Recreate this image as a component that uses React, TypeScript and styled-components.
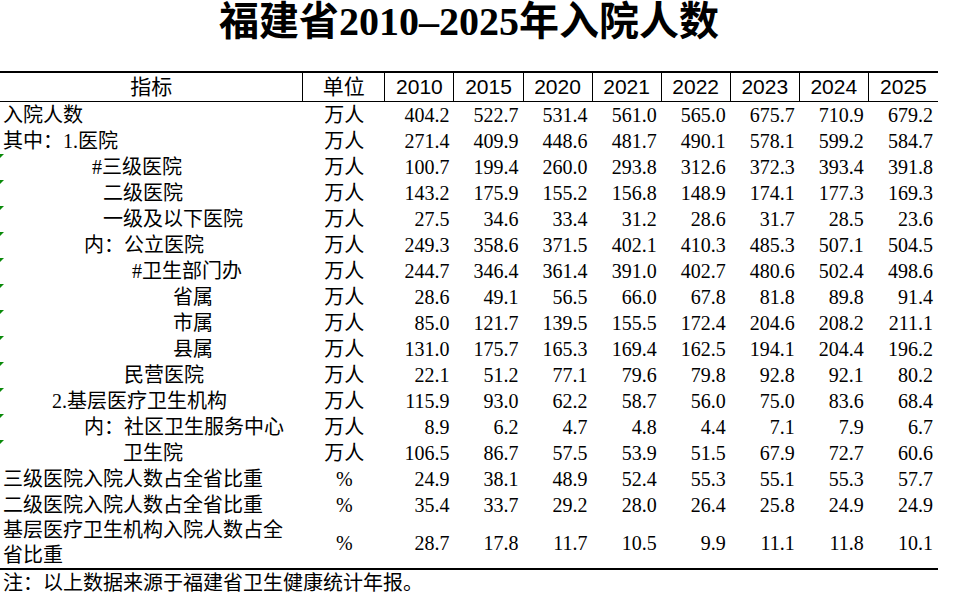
import styled, { createGlobalStyle } from "styled-components"

const GlobalStyle = createGlobalStyle`
  body {
    margin: 0;
    background: #fff;
    color: #000;
    font-family: "Liberation Serif", "Noto Sans CJK SC", serif;
  }
`

const Page = styled.div`
  width: 938px;
`

const Title = styled.h1`
  margin: 0 0 27px 0;
  height: 44px;
  line-height: 44px;
  text-align: center;
  font-size: 40px;
  font-weight: 700;
  font-family: "Liberation Serif", "Noto Sans CJK SC", serif;
`

const Table = styled.table`
  width: 938px;
  table-layout: fixed;
  border-collapse: separate;
  border-spacing: 0;
  font-size: 20px;
  line-height: 24px;
`

const HeadCell = styled.th<{ $last?: boolean }>`
  height: 28px;
  padding: 0;
  font-weight: 400;
  font-size: 21px;
  line-height: 26px;
  font-family: "Liberation Sans", "Noto Sans CJK SC", sans-serif;
  text-align: center;
  vertical-align: middle;
  border-top: 2px solid #000;
  border-bottom: 1px solid #000;
  border-right: ${(p) => (p.$last ? "none" : "1px solid #000")};
`

const Row = styled.tr<{ $tall?: boolean; $end?: boolean }>`
  & > td {
    height: ${(p) => (p.$tall ? "50px" : "26px")};
    border-bottom: ${(p) => (p.$end ? "2px solid #000" : "none")};
  }
`

const NameCell = styled.td<{ $indent: number; $mark?: boolean }>`
  position: relative;
  padding: 0 8px 0 ${(p) => p.$indent}px;
  line-height: 25px;
  vertical-align: middle;

  &::before {
    content: "";
    display: ${(p) => (p.$mark ? "block" : "none")};
    position: absolute;
    top: 0;
    left: 0;
    border-top: 4px solid #0a8a0a;
    border-right: 4px solid transparent;
  }
`

const UnitCell = styled.td`
  padding: 0;
  text-align: center;
  vertical-align: middle;
`

const NumCell = styled.td`
  padding: 0 5px 0 0;
  text-align: right;
  vertical-align: middle;
`

const Note = styled.div`
  padding-left: 3px;
  line-height: 26px;
  font-size: 20px;
`

const years = ["2010", "2015", "2020", "2021", "2022", "2023", "2024", "2025"]

type Item = {
  name: string
  indent: number
  unit: string
  values: string[]
  mark?: boolean
  tall?: boolean
}

const rows: Item[] = [
  { name: "入院人数", indent: 3, unit: "万人", values: ["404.2", "522.7", "531.4", "561.0", "565.0", "675.7", "710.9", "679.2"] },
  { name: "其中：1.医院", indent: 3, unit: "万人", values: ["271.4", "409.9", "448.6", "481.7", "490.1", "578.1", "599.2", "584.7"] },
  { name: "#三级医院", indent: 92, unit: "万人", mark: true, values: ["100.7", "199.4", "260.0", "293.8", "312.6", "372.3", "393.4", "391.8"] },
  { name: "二级医院", indent: 103, unit: "万人", mark: true, values: ["143.2", "175.9", "155.2", "156.8", "148.9", "174.1", "177.3", "169.3"] },
  { name: "一级及以下医院", indent: 103, unit: "万人", mark: true, values: ["27.5", "34.6", "33.4", "31.2", "28.6", "31.7", "28.5", "23.6"] },
  { name: "内：公立医院", indent: 84, unit: "万人", mark: true, values: ["249.3", "358.6", "371.5", "402.1", "410.3", "485.3", "507.1", "504.5"] },
  { name: "#卫生部门办", indent: 132, unit: "万人", mark: true, values: ["244.7", "346.4", "361.4", "391.0", "402.7", "480.6", "502.4", "498.6"] },
  { name: "省属", indent: 173, unit: "万人", mark: true, values: ["28.6", "49.1", "56.5", "66.0", "67.8", "81.8", "89.8", "91.4"] },
  { name: "市属", indent: 173, unit: "万人", mark: true, values: ["85.0", "121.7", "139.5", "155.5", "172.4", "204.6", "208.2", "211.1"] },
  { name: "县属", indent: 173, unit: "万人", mark: true, values: ["131.0", "175.7", "165.3", "169.4", "162.5", "194.1", "204.4", "196.2"] },
  { name: "民营医院", indent: 124, unit: "万人", mark: true, values: ["22.1", "51.2", "77.1", "79.6", "79.8", "92.8", "92.1", "80.2"] },
  { name: "2.基层医疗卫生机构", indent: 52, unit: "万人", mark: true, values: ["115.9", "93.0", "62.2", "58.7", "56.0", "75.0", "83.6", "68.4"] },
  { name: "内：社区卫生服务中心", indent: 84, unit: "万人", mark: true, values: ["8.9", "6.2", "4.7", "4.8", "4.4", "7.1", "7.9", "6.7"] },
  { name: "卫生院", indent: 123, unit: "万人", mark: true, values: ["106.5", "86.7", "57.5", "53.9", "51.5", "67.9", "72.7", "60.6"] },
  { name: "三级医院入院人数占全省比重", indent: 3, unit: "%", values: ["24.9", "38.1", "48.9", "52.4", "55.3", "55.1", "55.3", "57.7"] },
  { name: "二级医院入院人数占全省比重", indent: 3, unit: "%", values: ["35.4", "33.7", "29.2", "28.0", "26.4", "25.8", "24.9", "24.9"] },
  { name: "基层医疗卫生机构入院人数占全省比重", indent: 3, unit: "%", tall: true, values: ["28.7", "17.8", "11.7", "10.5", "9.9", "11.1", "11.8", "10.1"] },
]

const App = () => {
  return (
    <Page>
      <GlobalStyle />
      <Title>福建省2010–2025年入院人数</Title>
      <Table>
        <colgroup>
          <col style={{ width: 303 }} />
          <col style={{ width: 82 }} />
          {years.map((y) => (
            <col key={y} style={{ width: 69 }} />
          ))}
        </colgroup>
        <thead>
          <tr>
            <HeadCell>指标</HeadCell>
            <HeadCell>单位</HeadCell>
            {years.map((y, i) => (
              <HeadCell key={y} $last={i === years.length - 1}>
                {y}
              </HeadCell>
            ))}
          </tr>
        </thead>
        <tbody>
          {rows.map((r, i) => (
            <Row key={r.name} $tall={r.tall} $end={i === rows.length - 1}>
              <NameCell $indent={r.indent} $mark={r.mark}>
                {r.name}
              </NameCell>
              <UnitCell>{r.unit}</UnitCell>
              {r.values.map((v, j) => (
                <NumCell key={j}>{v}</NumCell>
              ))}
            </Row>
          ))}
        </tbody>
      </Table>
      <Note>注：以上数据来源于福建省卫生健康统计年报。</Note>
    </Page>
  )
}

export default App
